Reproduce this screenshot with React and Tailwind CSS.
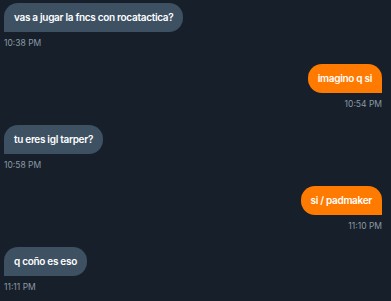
import React from "react";

const msgs = [
  { me: false, text: "vas a jugar la fncs con rocatactica?", time: "10:38 PM" },
  { me: true, text: "imagino q si", time: "10:54 PM" },
  { me: false, text: "tu eres igl tarper?", time: "10:58 PM" },
  { me: true, text: "si / padmaker", time: "11:10 PM" },
  { me: false, text: "q coño es eso", time: "11:11 PM" },
];

export default function App() {
  return (
    <div
      className="w-[391px] h-[301px] bg-[#17202a] overflow-hidden pt-[3px] pl-[4px] pr-[9px] flex flex-col gap-[15px]"
      style={{ fontFamily: "Inter, 'Noto Sans', sans-serif" }}
    >
      {msgs.map((m, i) => (
        <div key={i} className={"flex flex-col " + (m.me ? "items-end" : "items-start")}>
          <div
            className={
              "h-[29px] px-[10px] flex items-center text-[10px] font-semibold tracking-[-0.3px] text-white rounded-[14px] " +
              (m.me ? "bg-[#ff7a00] rounded-br-none" : "bg-[#3d5163] rounded-bl-none")
            }
          >
            {m.text}
          </div>
          <div className="mt-[5px] h-[12px] leading-[12px] text-[8.5px] text-[#8b98a5]">{m.time}</div>
        </div>
      ))}
    </div>
  );
}
